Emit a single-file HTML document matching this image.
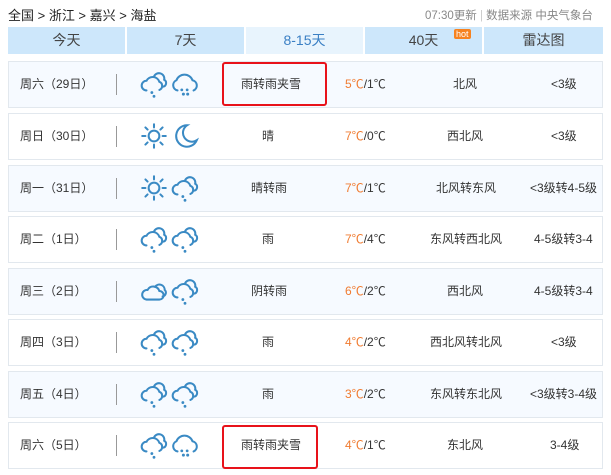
<!DOCTYPE html><html><head><meta charset="utf-8"><style>
*{margin:0;padding:0;box-sizing:border-box}
body{width:611px;height:475px;background:#fff;font-family:"Liberation Sans","Noto Sans CJK SC",sans-serif;position:relative;overflow:hidden;color:#333}
.a{position:absolute;white-space:nowrap}
.tab{position:absolute;top:27px;height:27px;background:#cde7fb;font-size:14px;color:#444;text-align:center;line-height:27px}
.row{position:absolute;left:8px;width:595px;height:47px;border:1px solid #e2e8ee;background:#fff;font-size:12px}
.row.o{background:#f6faff}
.row span{position:absolute;top:0;line-height:45px;white-space:nowrap}
.sep{position:absolute;left:107px;top:12px;width:1px;height:21px;background:#999}
.ic{position:absolute;top:7px;width:30px;height:30px}
.red{position:absolute;border:2px solid #e8121a;border-radius:3px}
</style></head><body>
<svg width="0" height="0" style="position:absolute">
<defs>
<symbol id="rain" viewBox="0 0 28 28"><g fill="none" stroke="#3a8ac4" stroke-width="1.9" stroke-linecap="round"><path d="M14 7a5 5 0 0 1 9.5 3a3.5 3.5 0 0 1-1 6.5"/><path d="M7 20a4.5 4.5 0 0 1 0-9a6.5 6.5 0 0 1 12 1a4 4 0 0 1 0 7.5"/></g><g fill="#3a8ac4"><circle cx="12" cy="22" r="1.3"/><circle cx="14" cy="25.5" r="1.3"/></g></symbol>
<symbol id="snow" viewBox="0 0 28 28"><g fill="none" stroke="#3a8ac4" stroke-width="1.9" stroke-linecap="round"><path d="M7 20a5 5 0 0 1-1-9.5a8 8 0 0 1 15 0a5 5 0 0 1 1 9.5"/></g><g fill="#3a8ac4"><circle cx="11" cy="19.5" r="1.3"/><circle cx="16" cy="19.5" r="1.3"/><circle cx="12.5" cy="23.5" r="1.4"/><circle cx="16.5" cy="23.5" r="1.4"/></g></symbol>
<symbol id="sun" viewBox="0 0 28 28"><g fill="none" stroke="#3a8ac4" stroke-width="1.9" stroke-linecap="round"><circle cx="14" cy="14" r="5"/><path d="M14 3v3M14 22v3M3 14h3M22 14h3M6 6l2 2M20 20l2 2M6 22l2-2M20 8l2-2"/></g></symbol>
<symbol id="moon" viewBox="0 0 28 28"><path d="M15 4a10 10 0 1 0 9 14a8 8 0 0 1-9-14z" fill="none" stroke="#3a8ac4" stroke-width="1.9"/></symbol>
<symbol id="cloud" viewBox="0 0 28 28"><g fill="none" stroke="#3a8ac4" stroke-width="1.9" stroke-linecap="round"><path d="M15 10a5 5 0 0 1 9 3a3.5 3.5 0 0 1-2 6"/><path d="M7 22a4.5 4.5 0 0 1 1-9a6 6 0 0 1 11 1a4 4 0 0 1 0 8z"/></g></symbol>
</defs></svg>
<div class="a" style="left:8px;top:5px;font-size:13px;color:#222">全国 &gt; 浙江 &gt; 嘉兴 &gt; 海盐</div>
<div class="a" style="left:425px;top:7px;font-size:11.5px;color:#888">07:30更新 <span style="color:#ccc">|</span> 数据来源 中央气象台</div>
<div class="tab" style="left:8px;width:117px">今天</div>
<div class="tab" style="left:127px;width:117px">7天</div>
<div class="tab" style="left:246px;width:117px;background:#e8f4fd;color:#3a7fc4">8-15天</div>
<div class="tab" style="left:365px;width:117px">40天</div>
<div class="a" style="left:454px;top:29px;background:#f6821f;color:#fff;font-size:9px;line-height:10px;padding:0 2px;border-radius:2px">hot</div>
<div class="tab" style="left:484px;width:119px">雷达图</div>

<div class="row o" style="top:61px"><span style="left:11px">周六（29日）</span><div class="sep"></div><svg class="ic" style="left:130px"><use href="#rain"/></svg><svg class="ic" style="left:161px"><use href="#snow"/></svg><span style="left:232px">雨转雨夹雪</span><span style="left:336px"><b style="font-weight:normal;color:#f07b30">5℃</b>/1℃</span><span style="left:444px">北风</span><span style="left:542px">&lt;3级</span></div>
<div class="row" style="top:113px"><span style="left:11px">周日（30日）</span><div class="sep"></div><svg class="ic" style="left:130px"><use href="#sun"/></svg><svg class="ic" style="left:162px"><use href="#moon"/></svg><span style="left:253px">晴</span><span style="left:336px"><b style="font-weight:normal;color:#f07b30">7℃</b>/0℃</span><span style="left:438px">西北风</span><span style="left:542px">&lt;3级</span></div>
<div class="row o" style="top:165px"><span style="left:11px">周一（31日）</span><div class="sep"></div><svg class="ic" style="left:130px"><use href="#sun"/></svg><svg class="ic" style="left:161px"><use href="#rain"/></svg><span style="left:242px">晴转雨</span><span style="left:336px"><b style="font-weight:normal;color:#f07b30">7℃</b>/1℃</span><span style="left:427px">北风转东风</span><span style="left:521px">&lt;3级转4-5级</span></div>
<div class="row" style="top:216px"><span style="left:11px">周二（1日）</span><div class="sep"></div><svg class="ic" style="left:130px"><use href="#rain"/></svg><svg class="ic" style="left:161px"><use href="#rain"/></svg><span style="left:253px">雨</span><span style="left:336px"><b style="font-weight:normal;color:#f07b30">7℃</b>/4℃</span><span style="left:421px">东风转西北风</span><span style="left:525px">4-5级转3-4</span></div>
<div class="row o" style="top:268px"><span style="left:11px">周三（2日）</span><div class="sep"></div><svg class="ic" style="left:130px"><use href="#cloud"/></svg><svg class="ic" style="left:161px"><use href="#rain"/></svg><span style="left:242px">阴转雨</span><span style="left:336px"><b style="font-weight:normal;color:#f07b30">6℃</b>/2℃</span><span style="left:438px">西北风</span><span style="left:525px">4-5级转3-4</span></div>
<div class="row" style="top:319px"><span style="left:11px">周四（3日）</span><div class="sep"></div><svg class="ic" style="left:130px"><use href="#rain"/></svg><svg class="ic" style="left:161px"><use href="#rain"/></svg><span style="left:253px">雨</span><span style="left:336px"><b style="font-weight:normal;color:#f07b30">4℃</b>/2℃</span><span style="left:421px">西北风转北风</span><span style="left:542px">&lt;3级</span></div>
<div class="row o" style="top:371px"><span style="left:11px">周五（4日）</span><div class="sep"></div><svg class="ic" style="left:130px"><use href="#rain"/></svg><svg class="ic" style="left:161px"><use href="#rain"/></svg><span style="left:253px">雨</span><span style="left:336px"><b style="font-weight:normal;color:#f07b30">3℃</b>/2℃</span><span style="left:421px">东风转东北风</span><span style="left:521px">&lt;3级转3-4级</span></div>
<div class="row" style="top:422px"><span style="left:11px">周六（5日）</span><div class="sep"></div><svg class="ic" style="left:130px"><use href="#rain"/></svg><svg class="ic" style="left:161px"><use href="#snow"/></svg><span style="left:232px">雨转雨夹雪</span><span style="left:336px"><b style="font-weight:normal;color:#f07b30">4℃</b>/1℃</span><span style="left:438px">东北风</span><span style="left:541px">3-4级</span></div>

<div class="red" style="left:222px;top:62px;width:105px;height:44px"></div>
<div class="red" style="left:222px;top:425px;width:96px;height:44px"></div>
</body></html>
